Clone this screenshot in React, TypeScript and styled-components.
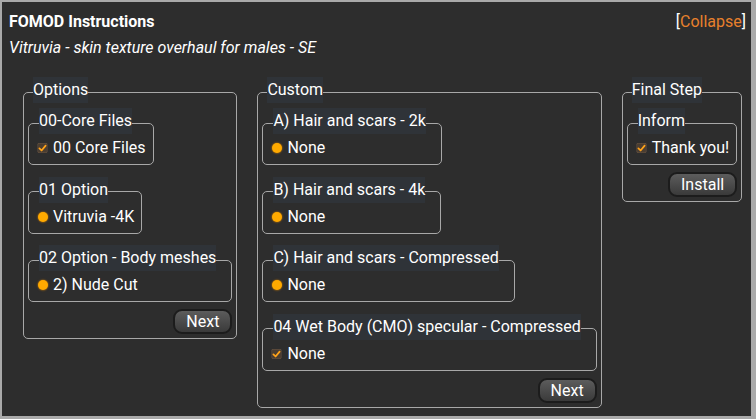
import React from "react";
import styled, { createGlobalStyle } from "styled-components";

const Global = createGlobalStyle`
  html, body { margin: 0; padding: 0; background: #a9a9a9; }
  body { font-family: Roboto, "Noto Sans", sans-serif; }
`;

const Panel = styled.div`
  margin: 2px 0 0 2px;
  width: 749px;
  height: 414px;
  box-sizing: border-box;
  background: #2d2d2d;
  padding: 9px 5px 0 7px;
  color: #fff;
  font-family: Roboto, "Noto Sans", sans-serif;
  font-size: 16px;
`;

const Header = styled.div`
  display: flex;
  justify-content: space-between;
  align-items: baseline;
  line-height: 21px;
`;

const Title = styled.div`
  font-weight: 700;
`;

const Collapse = styled.span`
  color: #fff;
`;

const CollapseLink = styled.span`
  color: #e8802c;
  cursor: pointer;
`;

const Subtitle = styled.div`
  font-style: italic;
  margin-top: 5px;
  line-height: 21px;
`;

const Columns = styled.div`
  display: flex;
  align-items: flex-start;
  gap: 20px;
  margin: 21px 0 0 14px;
`;

const Group = styled.fieldset`
  margin: 0;
  padding: 5px 4px 4px 4px;
  border: 1px solid #a8a8a8;
  border-radius: 5px;
  display: flex;
  flex-direction: column;
  align-items: flex-start;
  min-width: 0;
`;

const Legend = styled.legend<{ $inner?: boolean }>`
  padding: 0;
  margin-left: ${(p) => (p.$inner ? "2px" : "5px")};
  margin-right: ${(p) => (p.$inner ? "8px" : "0")};
  line-height: 26px;
  background: #2f3338;
  color: #fff;
  position: relative;
  top: -2px;
`;

const SubGroup = styled.fieldset`
  margin: 0;
  padding: 1px 7px 5px 8px;
  border: 1px solid #a8a8a8;
  border-radius: 5px;
  min-width: 0;
  & + & {
    margin-top: 13.67px;
  }
`;

const Choice = styled.label`
  display: flex;
  align-items: center;
  gap: 5px;
  line-height: 22px;
  white-space: nowrap;
`;

const ControlBox = styled.span`
  width: 11px;
  height: 11px;
  display: flex;
  align-items: center;
  justify-content: center;
  flex: none;
`;

const Dot = styled.span`
  width: 10px;
  height: 10px;
  border-radius: 50%;
  background: #ffaa00;
  box-shadow: 0 0 1.5px 0.5px rgba(200, 120, 0, 0.7);
`;

const Button = styled.button`
  align-self: flex-end;
  margin-top: 7px;
  height: 25px;
  box-sizing: border-box;
  padding: 0 11px;
  border: 2px solid #1c1c1c;
  border-radius: 9px;
  background: linear-gradient(#5c5c5c, #3a3a3a);
  color: #fff;
  font-family: Roboto, "Noto Sans", sans-serif;
  font-size: 16px;
  line-height: 21px;
  cursor: pointer;
`;

const Check = () => (
  <ControlBox>
    <svg width="12" height="12" viewBox="0 0 12 12">
      <defs>
        <filter id="soft" x="-20%" y="-20%" width="140%" height="140%">
          <feGaussianBlur stdDeviation="0.4" />
        </filter>
      </defs>
      <rect x="0.6" y="0.6" width="10.8" height="10.8" rx="1.6" fill="#6a5543" filter="url(#soft)" />
      <rect x="1.2" y="1.2" width="9.6" height="9.6" rx="1.2" fill="#4a3d31" />
      <path d="M2.6 6.4 L5 8.7 L9.4 3.4" fill="none" stroke="#ffa31a" strokeWidth="1.9" strokeLinecap="round" strokeLinejoin="round" />
    </svg>
  </ControlBox>
);

const Radio = () => (
  <ControlBox>
    <Dot />
  </ControlBox>
);

type Item = { title: string; option: string; kind: "check" | "radio" };

const Step = ({ title, items, action }: { title: string; items: Item[]; action: string }) => (
  <Group>
    <Legend>{title}</Legend>
    {items.map((it) => (
      <SubGroup key={it.title}>
        <Legend $inner>{it.title}</Legend>
        <Choice>
          {it.kind === "check" ? <Check /> : <Radio />}
          <span>{it.option}</span>
        </Choice>
      </SubGroup>
    ))}
    <Button>{action}</Button>
  </Group>
);

export default function App() {
  return (
    <>
      <Global />
      <Panel>
        <Header>
          <Title>FOMOD Instructions</Title>
          <Collapse>
            [<CollapseLink>Collapse</CollapseLink>]
          </Collapse>
        </Header>
        <Subtitle>Vitruvia - skin texture overhaul for males - SE</Subtitle>
        <Columns>
          <Step
            title="Options"
            action="Next"
            items={[
              { title: "00-Core Files", option: "00 Core Files", kind: "check" },
              { title: "01 Option", option: "Vitruvia -4K", kind: "radio" },
              { title: "02 Option - Body meshes", option: "2) Nude Cut", kind: "radio" },
            ]}
          />
          <Step
            title="Custom"
            action="Next"
            items={[
              { title: "A) Hair and scars - 2k", option: "None", kind: "radio" },
              { title: "B) Hair and scars - 4k", option: "None", kind: "radio" },
              { title: "C) Hair and scars - Compressed", option: "None", kind: "radio" },
              { title: "04 Wet Body (CMO) specular - Compressed", option: "None", kind: "check" },
            ]}
          />
          <Step
            title="Final Step"
            action="Install"
            items={[{ title: "Inform", option: "Thank you!", kind: "check" }]}
          />
        </Columns>
      </Panel>
    </>
  );
}
